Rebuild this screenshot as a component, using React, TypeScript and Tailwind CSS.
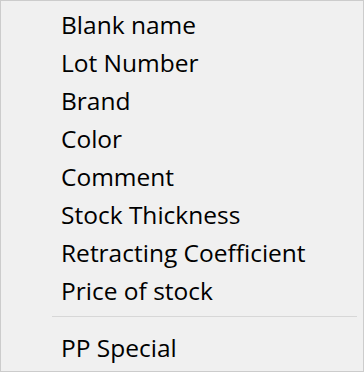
const items = [
  "Blank name",
  "Lot Number",
  "Brand",
  "Color",
  "Comment",
  "Stock Thickness",
  "Retracting Coefficient",
  "Price of stock",
];

function MenuItem({ label }: { label: string }) {
  return (
    <div className="flex h-[38px] items-center pl-[60px] text-[24.5px] leading-none text-black">
      {label}
    </div>
  );
}

export default function App() {
  return (
    <div
      className="flex h-[372px] w-[364px] flex-col border border-[#cccccc] bg-[#f0f0f0] pt-[5px]"
      style={{ fontFamily: '"Open Sans", "Noto Sans", sans-serif' }}
    >
      {items.map((item) => (
        <MenuItem key={item} label={item} />
      ))}
      {/* separator */}
      <div className="mb-[12px] ml-[51px] mr-[6px] mt-[6px] h-px bg-[#d7d7d7]" />
      <MenuItem label="PP Special" />
    </div>
  );
}
